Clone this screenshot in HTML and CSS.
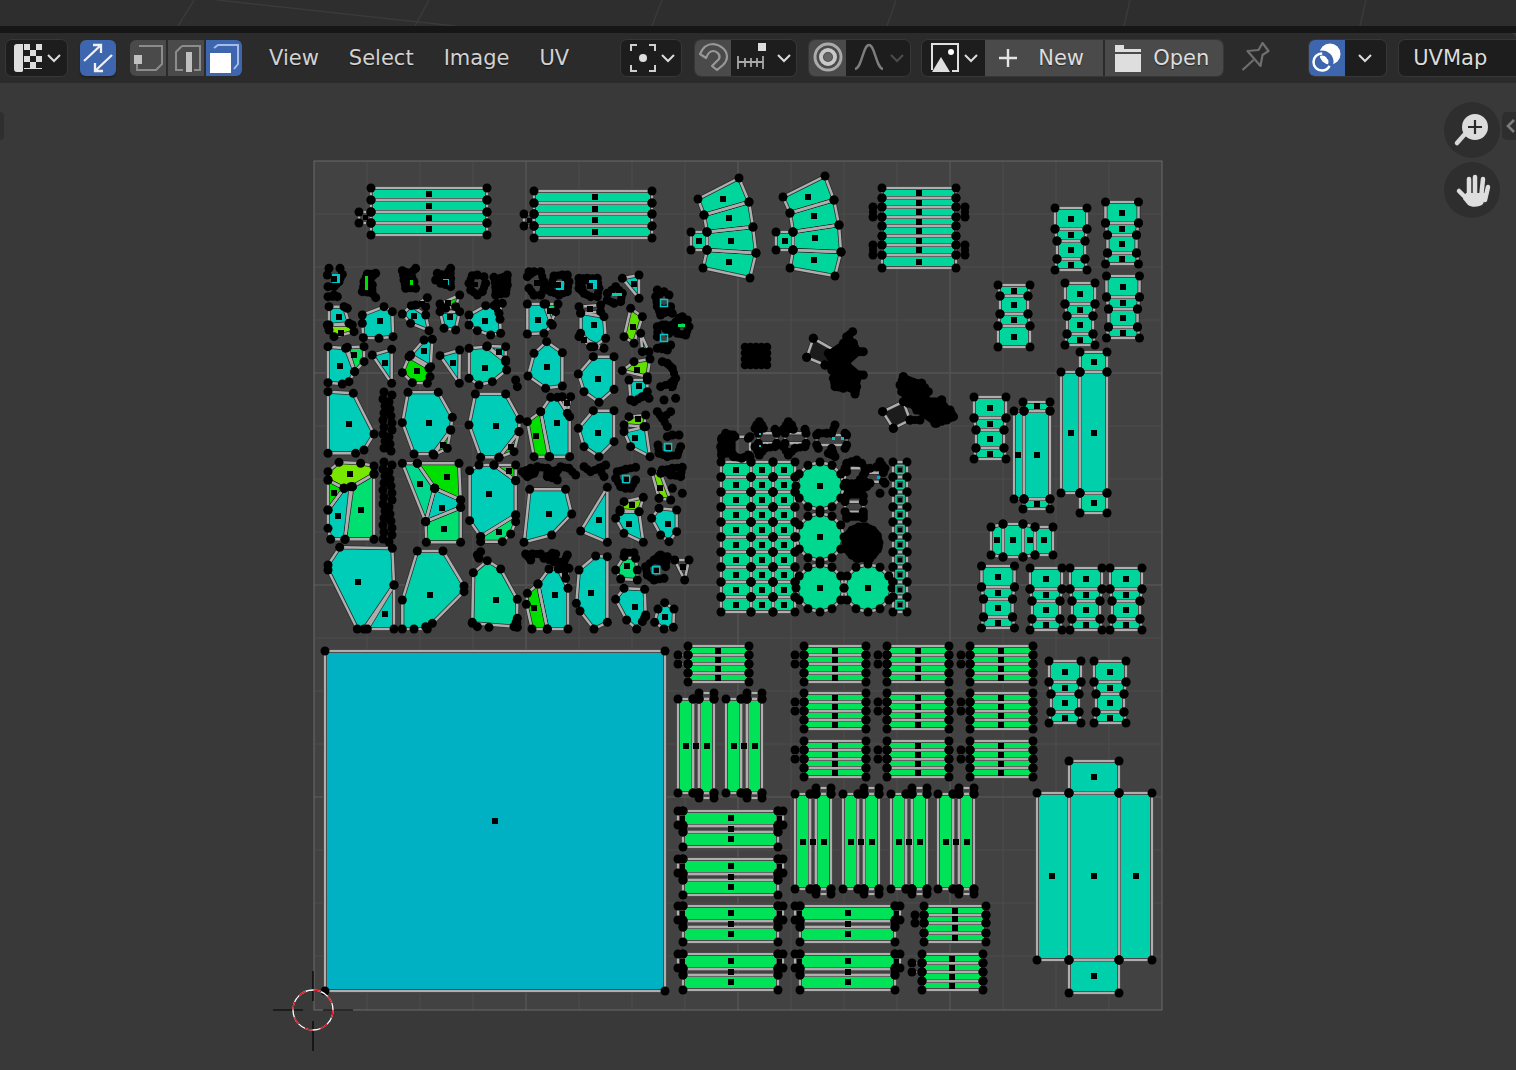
FILE: index.html
```html
<!DOCTYPE html>
<html lang="en">
<head>
<meta charset="utf-8">
<title>UV Editor</title>
<link rel="stylesheet" href="styles.css">
</head>
<body>
<div class="app">
  <div class="viewport-sliver">
    <svg class="sliver-lines" viewBox="0 0 1516 26" width="1516" height="26">
      <path d="M194 0L178 26M217 0L455 26M429 0L415 26M662 0L652 26M896 0L887 26M1130 0L1124 26M1366 0L1360 26"/>
    </svg>
  </div>
  <div class="area-gap"></div>
  <header class="header">
    <div class="field dd dd-editor">
      <svg class="ico" width="30" height="30" viewBox="0 0 30 30">
        <path class="w" d="M1 4a3 3 0 0 1 3-3h6v27a2 2 0 0 1-2 1H4a3 3 0 0 1-3-3z"/>
        <rect class="w" x="11" y="1" width="18" height="25"/>
        <path class="k" d="M17 1h6v6h-6zM11 7h6v6h-6zM23 7h6v6h-6zM17 13h6v6h-6zM11 19h6v6h-6zM23 19h6v6h-6z"/>
      </svg>
      <svg class="chev" width="14" height="10" viewBox="0 0 14 10"><path d="M1 2l6 6 6-6"/></svg>
    </div>
    <button class="tool active sync">
      <svg width="36" height="36" viewBox="0 0 36 36" class="line-w">
        <path d="M4 21L21 5M13 5h8v8M32 15L15 31M23 31h-8v-8"/>
      </svg>
    </button>
    <div class="seg seg-select">
      <button class="tool mode">
        <svg width="36" height="36" viewBox="0 0 36 36"><path class="dimline" d="M9 6h23v18l-6 6H7v-6"/><rect class="dimfill" x="4" y="15" width="8" height="9"/></svg>
      </button>
      <button class="tool mode">
        <svg width="36" height="36" viewBox="0 0 36 36"><path class="dimline" d="M14 6h18v24h-6M15 30H8V12l6-6"/><rect class="dimfill" x="18" y="12" width="6" height="20"/></svg>
      </button>
      <button class="tool mode active">
        <svg width="36" height="36" viewBox="0 0 36 36"><path class="softline" d="M8 8l4-3h20v19l-4 5"/><rect class="fillw" x="4" y="13" width="21" height="20"/></svg>
      </button>
    </div>
    <nav class="menus">
      <span class="menu">View</span><span class="menu">Select</span><span class="menu">Image</span><span class="menu">UV</span>
    </nav>
    <div class="field dd dd-pivot">
      <svg class="ico" width="30" height="30" viewBox="0 0 30 30">
        <path class="brk" d="M3 8V2h6M21 2h6v6M27 22v6h-6M9 28H3v-6"/><circle class="dot" cx="15" cy="15" r="4"/>
      </svg>
      <svg class="chev" width="14" height="10" viewBox="0 0 14 10"><path d="M1 2l6 6 6-6"/></svg>
    </div>
    <div class="seg seg-snap">
      <button class="tool gray w36">
        <svg width="36" height="36" viewBox="0 0 36 36"><path class="magnet" d="M5 14C8 7 13 4 18 4c8 1 14 6 14 13 0 3-2 6-4 8l-6 5-5-4 7-7c2-4-2-8-6-8-3 0-5 2-7 7z"/></svg>
      </button>
      <div class="field-inner w65">
        <svg width="32" height="30" viewBox="0 0 32 30" class="ico">
          <rect class="dimfill2" x="22" y="0" width="8" height="8"/>
          <path class="ruler" d="M2 19h25M2 13v13M27 13v13M9 15v9M15 15v9M21 15v9"/>
        </svg>
        <svg class="chev" width="14" height="10" viewBox="0 0 14 10"><path d="M1 2l6 6 6-6"/></svg>
      </div>
    </div>
    <div class="seg seg-prop">
      <button class="tool gray w37">
        <svg width="36" height="36" viewBox="0 0 36 36"><circle class="ring" cx="18" cy="17" r="13"/><circle class="ring2" cx="18" cy="17" r="7"/><circle class="core" cx="18" cy="17" r="4"/></svg>
      </button>
      <div class="field-inner w64">
        <svg width="32" height="30" viewBox="0 0 32 30" class="ico"><path class="curve" d="M4 26c7-1 8-24 14-24s7 23 14 24"/></svg>
        <svg class="chev dim" width="14" height="10" viewBox="0 0 14 10"><path d="M1 2l6 6 6-6"/></svg>
      </div>
    </div>
    <div class="seg seg-image">
      <div class="field-inner w63">
        <svg class="ico" width="30" height="30" viewBox="0 0 30 30">
          <path class="frame" d="M1 27V1h26v27h-6"/><path class="fillpath" d="M1 29l9-15 9 15z"/><circle class="fillw" cx="20" cy="9" r="3"/>
        </svg>
        <svg class="chev" width="14" height="10" viewBox="0 0 14 10"><path d="M1 2l6 6 6-6"/></svg>
      </div>
      <button class="tool gray textbtn btn-new">
        <svg width="20" height="20" viewBox="0 0 20 20"><path class="plus" d="M10 1v18M1 10h18"/></svg>
        <span class="label">New</span>
      </button>
      <button class="tool gray textbtn btn-open">
        <svg width="28" height="30" viewBox="0 0 28 30"><path class="fillpath" d="M1 2h9v4h17v3H1zM1 11h26v18H1z"/></svg>
        <span class="label">Open</span>
      </button>
    </div>
    <div class="pin">
      <svg width="32" height="32" viewBox="0 0 32 32"><path class="pinline" d="M3.500 28l11-10M8.500 9l11-1 4-7 6 8-6 4-2 11z"/></svg>
    </div>
    <div class="seg seg-overlay">
      <button class="tool active w36b">
        <svg width="36" height="36" viewBox="0 0 36 36"><circle class="fillw" cx="21" cy="14" r="10.500"/><circle class="ovgap" cx="13" cy="22" r="9"/><circle class="ov" cx="13" cy="22" r="8.500"/><circle class="blue-dot" cx="20" cy="17" r="2.500"/></svg>
      </button>
      <div class="field-inner w41">
        <svg class="chev" width="14" height="10" viewBox="0 0 14 10"><path d="M1 2l6 6 6-6"/></svg>
      </div>
    </div>
    <div class="field uvmap"><span class="label">UVMap</span></div>
  </header>
  <main class="editor">
    <svg id="uv" class="uv-canvas" viewBox="0 83 1516 987" width="1516" height="987"></svg>
    <div class="left-tab"></div>
    <div class="right-tab"><svg width="10" height="16" viewBox="0 0 10 16"><path d="M8 2L2 8l6 6"/></svg></div>
    <div class="gizmo gizmo-zoom">
      <svg width="56" height="56" viewBox="0 0 56 56">
        <path class="handle" d="M21 32L13 41"/><circle class="lens" cx="31" cy="25" r="13"/><path class="lensplus" d="M31 18v14M24 25h14"/>
      </svg>
    </div>
    <div class="gizmo gizmo-hand">
      <svg width="56" height="56" viewBox="0 0 56 56">
        <path class="palm" d="M25 36V17M31 34V15M37 36l2-19M41 38l3-13M15 29l9 9"/>
        <path class="palmfill" d="M22 31h21l-4 11c-3 3-11 4-15 1l-5-6z"/>
      </svg>
    </div>
  </main>
</div>
<script src="script.js"></script>
</body>
</html>
```
FILE: styles.css
```css
* { box-sizing: border-box; }
html, body { margin: 0; padding: 0; height: 100%; overflow: hidden; background: #393939; }
.app { width: 1516px; height: 1070px; display: flex; flex-direction: column; font-family: "DejaVu Sans", sans-serif; font-size: 21px; color: #d6d6d6; }
.viewport-sliver { height: 26px; background: #2e2e2e; flex: none; }
.sliver-lines { display: block; }
.sliver-lines path { stroke: #3a3a3a; stroke-width: 1.500; fill: none; }
.area-gap { height: 7px; background: #161616; flex: none; }
.header { height: 50px; flex: none; background: #2b2b2b; display: flex; align-items: center; padding-left: 5px; white-space: nowrap; border-top-right-radius: 6px; overflow: hidden; }
.header > * { flex: none; }
button { font: inherit; color: inherit; border: 0; padding: 0; margin: 0; display: flex; align-items: center; justify-content: center; }
svg { display: block; flex: none; }
.tool { height: 36px; border-radius: 6px; box-shadow: 0 2px 2px rgba(0,0,0,.25); flex: none; }
.active { background: #3d66ae; }
.gray { background: #4a4a4a; }
.field { height: 38px; background: #1d1d1d; border: 1px solid #373737; border-radius: 7px; display: flex; align-items: center; }
.field-inner { height: 36px; background: #1d1d1d; display: flex; align-items: center; flex: none; }
.dd { justify-content: flex-start; }
.dd-editor { width: 63px; padding-left: 7px; gap: 4px; }
.sync { width: 36px; margin-left: 12px; }
.seg { display: flex; height: 36px; border-radius: 6px; overflow: hidden; box-shadow: 0 0 0 1px #373737; }
.seg-select { margin-left: 14px; width: 112px; gap: 2px; box-shadow: none; }
.mode { width: 36px; border-radius: 0; background: #4a4a4a; box-shadow: none; }
.mode.active { background: #3d66ae; }
.menus { display: flex; margin-left: 12px; }
.menu { padding: 0 15px; line-height: 36px; color: #d2d2d2; text-shadow: 0 1px 1px rgba(0,0,0,.5); }
.dd-pivot { width: 62px; margin-left: 36px; padding-left: 7px; gap: 3px; }
.seg-snap { margin-left: 13px; width: 101px; }
.seg-snap .tool, .seg-prop .tool, .seg-image .tool, .seg-overlay .tool { border-radius: 0; box-shadow: none; }
.w36 { width: 36px; }
.w37 { width: 37px; }
.w65 { width: 65px; padding-left: 5px; gap: 9px; }
.w64 { width: 64px; padding-left: 5px; gap: 7px; }
.w63 { width: 63px; padding-left: 9px; gap: 3px; }
.w36b { width: 36px; }
.w41 { width: 41px; padding-left: 13px; }
.seg-prop { margin-left: 13px; width: 101px; }
.seg-image { margin-left: 12px; width: 301px; }
.textbtn { justify-content: flex-start; }
.btn-new { width: 118px; margin-right: 2px; padding-left: 13px; gap: 20px; }
.btn-open { width: 118px; padding-left: 9px; gap: 11px; }
.pin { width: 37px; margin-left: 13px; height: 36px; display: flex; align-items: center; justify-content: center; }
.seg-overlay { margin-left: 36px; width: 77px; }
.uvmap { margin-left: 12px; width: 130px; padding-left: 14px; border-radius: 7px 0 0 7px; border-right: 0; }
.label { color: #dcdcdc; text-shadow: 0 1px 1px rgba(0,0,0,.5); }
.chev path { fill: none; stroke: #dcdcdc; stroke-width: 2; }
.chev.dim path { stroke: #4c4c4c; }
.w { fill: #dedede; }
.k { fill: #1d1d1d; }
.line-w path { fill: none; stroke: #f0f0f0; stroke-width: 2.300; }
.dimline { fill: none; stroke: #8c8c8c; stroke-width: 2; }
.softline { fill: none; stroke: #a4bce6; stroke-width: 2; }
.dimfill { fill: #c0c0c0; }
.dimfill2 { fill: #dcdcdc; }
.fillw { fill: #ffffff; }
.brk { fill: none; stroke: #cfcfcf; stroke-width: 2; }
.dot { fill: #dedede; }
.magnet { fill: none; stroke: #989898; stroke-width: 2.200; stroke-linejoin: round; }
.ruler { fill: none; stroke: #a8a8a8; stroke-width: 1.800; }
.ring { fill: none; stroke: #ababab; stroke-width: 3; }
.ring2 { fill: none; stroke: #c8c8c8; stroke-width: 4; }
.core { fill: #666666; }
.curve { fill: none; stroke: #7d7d7d; stroke-width: 2.400; }
.frame { fill: none; stroke: #e0e0e0; stroke-width: 2; }
.fillpath { fill: #dedede; }
.plus { stroke: #e4e4e4; stroke-width: 2.400; fill: none; }
.pinline { fill: none; stroke: #6e6e6e; stroke-width: 2.200; stroke-linejoin: round; }
.ov { fill: none; stroke: #ffffff; stroke-width: 2.500; stroke-dasharray: 36 20; stroke-dashoffset: -4; }
.ovgap { fill: none; stroke: #3d66ae; stroke-width: 5; }
.blue-dot { fill: #3d66ae; }
.editor { position: relative; flex: 1; background: #393939; overflow: hidden; }
.uv-canvas { position: absolute; left: 0; top: 0; }
.left-tab { position: absolute; left: 0; top: 29px; width: 4px; height: 28px; background: #2f2f2f; border-radius: 0 4px 4px 0; }
.right-tab { position: absolute; right: 0; top: 29px; width: 14px; height: 28px; background: #2e2e2e; border-radius: 5px 0 0 5px; display: flex; align-items: center; padding-left: 4px; }
.right-tab path { fill: none; stroke: #7c7c7c; stroke-width: 2.600; }
.gizmo { position: absolute; left: 1444px; width: 56px; height: 56px; border-radius: 50%; background: #2e2e2e; }
.gizmo-zoom { top: 19px; }
.gizmo-hand { top: 79px; }
.handle { stroke: #d8d8d8; stroke-width: 4.500; stroke-linecap: round; fill: none; }
.lens { fill: #dcdcdc; }
.lensplus { stroke: #2a2a2a; stroke-width: 2.200; fill: none; }
.palm { stroke: #dedede; stroke-width: 4.500; stroke-linecap: round; fill: none; }
.palmfill { fill: #dedede; }
```
FILE: script.js
```js
(function () {
  var NS = 'http://www.w3.org/2000/svg';
  var svg = document.getElementById('uv');
  function el(name, attrs, parent) {
    var n = document.createElementNS(NS, name);
    for (var k in attrs) n.setAttribute(k, attrs[k]);
    (parent || svg).appendChild(n);
    return n;
  }
  var T = '#00cdb8', TG = '#00d69c', TC = '#00cfac', G = '#00d890', BG = '#00e000', LG = '#00e258', Y = '#78e800', C = '#00b1c3', MG = '#00e070';

  // background, image plane and grid
  el('rect', { x: 314, y: 161, width: 848, height: 849, fill: '#424242' });
  var i, x, y;
  var gridD = '', gridT = '';
  for (i = 1; i < 16; i++) {
    x = 314 + 53 * i; y = 161 + 53 * i;
    if (i % 4 === 0) gridT += 'M' + x + ' 161V1010M314 ' + y + 'H1162';
    else gridD += 'M' + x + ' 161V1010M314 ' + y + 'H1162';
  }
  el('path', { d: gridD, stroke: '#4a4a4a', 'stroke-width': 1.500, fill: 'none' });
  el('path', { d: gridT, stroke: '#4f4f4f', 'stroke-width': 2, fill: 'none' });
  el('rect', { x: 314, y: 161, width: 848, height: 849, fill: 'none', stroke: '#6a6a6a', 'stroke-width': 1 });

  var gFill = el('g', {}), gOuter = el('g', { fill: 'none', stroke: '#2a2a2a', 'stroke-width': 4, 'stroke-linejoin': 'round' }),
    gInner = el('g', { fill: 'none', stroke: '#aeaeae', 'stroke-width': 2.500, 'stroke-linejoin': 'round' }),
    gDots = el('g', { fill: '#000' });

  function dot(x, y, r) { el('circle', { cx: x, cy: y, r: r || 4.500 }, gDots); }
  function sq(x, y, s) {
    s = s || 6;
    el('rect', { x: Math.round(x - s / 2), y: Math.round(y - s / 2), width: s, height: s }, gDots);
  }

  // polygon island in page coordinates: flat point list, fill, optional centre
  function P(pts, col, c) {
    var s = '';
    for (var j = 0; j < pts.length; j += 2) s += pts[j] + ',' + pts[j + 1] + ' ';
    if (col) el('polygon', { points: s, fill: col }, gFill);
    el('polygon', { points: s }, gOuter);
    el('polygon', { points: s }, gInner);
    for (j = 0; j < pts.length; j += 2) dot(pts[j], pts[j + 1]);
    if (c) sq(c[0], c[1]);
  }
  function mapper(bx, by) {
    return function (flat) {
      var o = [];
      for (var j = 0; j < flat.length; j += 2) { o.push(bx + flat[j] / 3, by + flat[j + 1] / 3); }
      return o;
    };
  }
  var z3 = mapper(314, 160), z4 = mapper(314, 430), z5 = mapper(700, 320);
  function p3(f, col, c) { P(z3(f), col, c ? z3(c) : null); }
  function p4(f, col, c) { P(z4(f), col, c ? z4(c) : null); }
  function p5(f, col, c) { P(z5(f), col, c ? z5(c) : null); }
  // tight clusters of vertices: close neighbours get a bridging vertex so they read as lumps
  function clump(f) {
    for (var j = 0; j < f.length; j += 2) {
      dot(f[j], f[j + 1], 4.500);
      for (var k = j + 2; k < f.length; k += 2) {
        var d = Math.hypot(f[j] - f[k], f[j + 1] - f[k + 1]);
        if (d > 7 && d < 11) dot((f[j] + f[k]) / 2, (f[j + 1] + f[k + 1]) / 2, 4);
      }
    }
  }
  function solid(f) {
    var s = '';
    for (var j = 0; j < f.length; j += 2) {
      s += f[j] + ',' + f[j + 1] + ' ';
      dot(f[j], f[j + 1], 4.500);
    }
    el('polygon', { points: s, fill: '#000', stroke: '#000', 'stroke-width': 5, 'stroke-linejoin': 'round' }, gDots);
  }
  function ring(x, y, col, s) {
    el('rect', { x: x - s / 2, y: y - s / 2, width: s, height: s, fill: 'none', stroke: col, 'stroke-width': 1.500 }, gDots);
  }
  function bit(x, y, w, h, col) { el('rect', { x: x, y: y, width: w, height: h, fill: col }, gDots); }

  // stacked horizontal strips
  function strips(x0, x1, ys, cx, col, leftIdx, step) {
    for (var j = 0; j < ys.length - 1; j++) {
      P([x0, ys[j], x1, ys[j], x1, ys[j + 1], x0, ys[j + 1]], col, [cx, (ys[j] + ys[j + 1]) / 2]);
    }
    if (leftIdx != null) {
      var a = ys[leftIdx], b = ys[leftIdx + 1], lx = x0 - (step || 10);
      P([lx, a, x0, a, x0, b, lx, b], null, null);
    }
  }
  // hourglass stack
  function hour(xc, y0, hw, flip, h) {
    h = h || 62;
    var r = [[0, hw], [21, hw], [33, hw - 2], [51, hw - 2], [62, hw]].map(function (v) {
      var o = v[0] * h / 62;
      return [flip ? y0 + h - o : y0 + o, v[1]];
    });
    for (var j = 0; j < 4; j++) {
      var a = r[j], b = r[j + 1];
      P([xc - a[1], a[0], xc + a[1], a[0], xc + b[1], b[0], xc - b[1], b[0]], TG, [xc, (a[0] + b[0]) / 2]);
    }
  }
  function columns(xs, y0, step, n, col) {
    for (var c = 0; c < xs.length - 1; c++) for (var r = 0; r < n; r++) {
      var a = xs[c], b = xs[c + 1], t = y0 + r * step, u = t + step;
      P([a, t, b, t, b, u, a, u], col, [(a + b) / 2, (t + u) / 2]);
    }
  }
  function ngon(cx, cy, r, n, col) {
    var f = [];
    for (var j = 0; j < n; j++) { var a = j * 2 * Math.PI / n; f.push(cx + r * Math.cos(a), cy + r * Math.sin(a)); }
    el('circle', { cx: cx, cy: cy, r: r - 2.500, fill: col }, gFill);
    P(f, null, [cx, cy]);
  }
  function vPair(x0, yt, yb) {
    var a = x0, b = x0 + 15, c = x0 + 21, d = x0 + 36;
    P([a, yt, b, yt, b, yb, a, yb], LG, [(a + b) / 2, (yt + yb) / 2]);
    P([b, yt, c, yt, c, yb, b, yb], null, [(b + c) / 2, (yt + yb) / 2]);
    P([c, yt, d, yt, d, yb, c, yb], LG, [(c + d) / 2, (yt + yb) / 2]);
    P([c, yt - 6, d, yt - 6, d, yt, c, yt], null, null);
    P([c, yb, d, yb, d, yb + 5, c, yb + 5], null, null);
  }
  function fatH(x0, x1, y0) {
    var cx = (x0 + x1) / 2;
    P([x0, y0, x1, y0, x1, y0 + 15, x0, y0 + 15], LG, [cx, y0 + 7]);
    P([x0, y0 + 15, x1, y0 + 15, x1, y0 + 21, x0, y0 + 21], null, [cx, y0 + 18]);
    P([x0, y0 + 21, x1, y0 + 21, x1, y0 + 36, x0, y0 + 36], LG, [cx, y0 + 28]);
    P([x0 - 5, y0, x0, y0, x0, y0 + 14, x0 - 5, y0 + 14], null, null);
    P([x1, y0, x1 + 5, y0, x1 + 5, y0 + 14, x1, y0 + 14], null, null);
    sq(x0 - 1, y0 + 7, 5); sq(x1 + 1, y0 + 7, 5);
  }

  // big square
  P([325, 651, 665, 651, 665, 991, 325, 991], C, [495, 821]);

  // top strips
  strips(371, 487, [188, 200, 212, 223, 235], 429, TG, 2, 12);
  strips(534, 652, [191, 203, 214, 226, 238], 595, TG, 2, 10);
  sq(365, 217, 5); sq(529, 220, 5);

  // fans
  function fan(l, r, cs, sx) {
    for (var j = 0; j < 4; j++) {
      P([l[j][0], l[j][1], r[j][0], r[j][1], r[j + 1][0], r[j + 1][1], l[j + 1][0], l[j + 1][1]], TG, cs[j]);
    }
    P([sx, l[2][1], l[2][0], l[2][1], l[3][0], l[3][1], sx, l[3][1]], TG, [(sx + l[2][0]) / 2, (l[2][1] + l[3][1]) / 2]);
  }
  fan([[698, 199], [704, 215], [707, 232], [707, 250], [703, 268]], [[739, 178], [749, 202], [753, 227], [756, 253], [750, 278]],
    [[723, 199], [729, 218], [731, 241], [729, 262]], 691);
  fan([[783, 197], [790, 213], [793, 232], [793, 250], [790, 268]], [[825, 176], [834, 200], [839, 225], [841, 252], [835, 276]],
    [[808, 197], [814, 216], [815, 238], [814, 260]], 776);

  // stack
  strips(882, 956, [188, 198, 207, 217, 226, 236, 245, 255, 268], 919, TG, null);
  clump([873, 207, 873, 217, 965, 207, 965, 217, 873, 245, 873, 255, 965, 245, 965, 255]);

  // right column hourglasses
  hour(1071, 208, 16); hour(1122, 202, 16.500); hour(1014, 285, 16, true);
  hour(1080, 283, 15); hour(1123, 276, 16.500); hour(990, 397, 16);
  hour(998, 566, 16.500); hour(1046, 568, 16); hour(1086, 568, 16); hour(1126, 568, 16);
  hour(1065, 661, 16); hour(1110, 661, 16);

  // tall cross pieces
  P([1061, 372, 1080, 372, 1080, 493, 1061, 493], TC, [1071, 433]);
  P([1080, 372, 1107, 372, 1107, 493, 1080, 493], TC, [1094, 433]);
  P([1080, 352, 1107, 352, 1107, 372, 1080, 372], TG, [1094, 362]);
  P([1080, 493, 1107, 493, 1107, 513, 1080, 513], TG, [1094, 503]);
  P([1014, 411, 1024, 411, 1024, 499, 1014, 499], TC, [1018, 455]);
  P([1024, 411, 1050, 411, 1050, 499, 1024, 499], TC, [1037, 455]);
  P([1023, 402, 1050, 402, 1050, 411, 1024, 411], TG, [1037, 406]);
  P([1024, 499, 1050, 499, 1050, 509, 1023, 509], TG, [1037, 504]);
  // small horizontal piece
  P([991, 527, 1003, 524, 1003, 557, 991, 555], TG, [997, 540]);
  P([1003, 524, 1023, 524, 1023, 557, 1003, 557], TG, [1013, 540]);
  P([1023, 524, 1035, 527, 1035, 555, 1023, 557], TG, [1030, 540]);
  P([1035, 527, 1053, 527, 1053, 555, 1035, 555], TG, [1044, 540]);

  // small columns and discs
  columns([721, 751, 773, 795], 462, 15, 10, G);
  ngon(820, 486, 24, 12, G); ngon(820, 537, 24, 12, G); ngon(820, 588, 24, 12, G); ngon(868, 588, 24, 12, G);
  for (i = 0; i < 10; i++) {
    P([893, 462 + i * 15, 907, 462 + i * 15, 907, 477 + i * 15, 893, 477 + i * 15], null, null);
    ring(900, 469.500 + i * 15, '#00d8a0', 8); sq(900, 469.500 + i * 15, 4);
  }

  // black clumps in the middle
  for (x = 745; x <= 768; x += 5.500) for (y = 347; y <= 365; y += 6) dot(x, y, 4.300);
  p5([340, 55, 320, 112, 375, 135, 410, 95], '#1c1c1c', null);
  solid(z5([385, 100, 430, 70, 460, 70, 480, 95, 440, 130, 480, 165, 465, 215, 410, 195, 395, 150]));
  clump(z5([340, 55, 320, 112, 375, 135, 458, 35, 440, 50, 470, 95, 490, 95, 490, 165, 470, 200, 465, 222, 405, 200, 430, 205, 460, 70, 400, 175]));
  p5([548, 275, 580, 325, 630, 300, 610, 245], '#1c1c1c', null);
  solid(z5([610, 170, 665, 190, 680, 240, 725, 240, 760, 290, 705, 310, 650, 270, 625, 250, 605, 215]));
  clump(z5([610, 170, 600, 195, 610, 215, 635, 190, 665, 190, 685, 215, 548, 275, 580, 325, 630, 300, 660, 300, 710, 310, 725, 240, 750, 270, 760, 290, 740, 300]));
  p5([175, 340, 230, 340, 230, 370, 175, 370], null, null);
  clump(z5([178, 305, 165, 325, 190, 325, 225, 328, 225, 380, 165, 380, 178, 405, 195, 385, 170, 315, 185, 315]));
  bit(759, 433, 2, 2, '#00c8c8'); bit(759, 445, 2, 2, '#00c8c8');
  p5([255, 340, 318, 340, 318, 370, 255, 370], null, null);
  clump(z5([265, 305, 250, 328, 280, 328, 315, 328, 315, 380, 250, 380, 265, 405, 285, 385, 260, 315, 275, 315]));
  p5([350, 345, 440, 345, 440, 375, 350, 375], null, null);
  clump(z5([405, 315, 355, 340, 380, 340, 395, 340, 435, 340, 435, 385, 355, 385, 385, 400, 405, 410, 395, 385]));
  bit(832, 437, 3, 3, '#00c8c8'); bit(841, 437, 3, 3, '#00c8c8');
  p5([105, 350, 150, 350, 150, 410, 105, 410], null, null);
  solid(z5([65, 355, 100, 350, 100, 405, 65, 405]));
  clump(z5([77, 340, 100, 345, 65, 360, 62, 380, 65, 405, 100, 410, 145, 355, 145, 405, 125, 415]));
  p5([435, 445, 495, 445, 495, 490, 435, 490], null, null);
  clump(z5([440, 430, 470, 420, 485, 430, 455, 425, 440, 490, 470, 490, 490, 465, 440, 455]));
  p5([495, 458, 550, 458, 550, 485, 495, 485], null, null);
  clump(z5([540, 425, 510, 445, 555, 445, 555, 490, 510, 490, 540, 520, 500, 500, 530, 440]));
  bit(877, 476, 3, 3, '#00a8d0');
  solid(z5([440, 500, 490, 500, 490, 528, 440, 528]));
  p5([435, 545, 490, 545, 490, 575, 435, 575], null, null);
  solid(z5([440, 585, 490, 585, 490, 595, 440, 595]));
  // lens-shaped blob
  solid(z5([487, 625, 525, 640, 535, 680, 510, 715, 470, 715, 442, 680, 450, 640]));
  var ell = [];
  for (i = 0; i < 14; i++) { var an = i * Math.PI / 7; ell.push(487 + 50 * Math.cos(an), 668 + 48 * Math.sin(an)); }
  clump(z5(ell));
  p5([480, 640, 505, 640, 505, 695, 480, 695], null, null);
  solid(z5([484, 648, 501, 648, 501, 688, 484, 688]));

  // strip groups, lower right
  var hs = [[646, 655, 664, 673, 682], [693, 702, 711, 720, 729], [741, 750, 759, 768, 777]];
  var gx = [[804, 866, 835], [887, 949, 918], [970, 1033, 1001]];
  gx.forEach(function (g) { hs.forEach(function (ys) { strips(g[0], g[1], ys, g[2], LG, 1, 9); }); });
  strips(688, 749, hs[0], 718, LG, 1, 10);
  strips(924, 986, [906, 915, 923, 933, 942], 955, LG, 1, 9);
  strips(922, 983, [954, 963, 972, 981, 990], 952, LG, 1, 10);
  vPair(678, 699, 793); vPair(726, 699, 793);
  vPair(795, 794, 889); vPair(843, 794, 889); vPair(891, 794, 889); vPair(938, 794, 889);
  [811, 859, 906, 954].forEach(function (y0) { fatH(683, 778, y0); });
  [906, 954].forEach(function (y0) { fatH(800, 895, y0); });

  // big cross
  P([1037, 793, 1069, 793, 1069, 960, 1037, 960], TC, [1052, 876]);
  P([1069, 793, 1119, 793, 1119, 960, 1069, 960], TC, [1094, 876]);
  P([1119, 793, 1152, 793, 1152, 960, 1119, 960], TC, [1136, 876]);
  P([1069, 761, 1119, 761, 1119, 793, 1069, 793], TC, [1094, 777]);
  P([1069, 960, 1119, 960, 1119, 993, 1069, 993], TC, [1094, 976]);

  // organic islands, upper block (first row of clumps)
  clump(z3([45, 325, 78, 325, 85, 343, 40, 345, 75, 365, 42, 380, 60, 380]));
  clump(z3([160, 342, 185, 340, 150, 365, 175, 375, 145, 395, 175, 400, 185, 413, 160, 385, 170, 355]));
  clump(z3([265, 332, 305, 325, 290, 340, 270, 360, 300, 365, 275, 385, 305, 385, 285, 360, 285, 380]));
  clump(z3([410, 325, 370, 340, 395, 345, 365, 360, 410, 380, 380, 370, 410, 355]));
  clump(z3([475, 347, 510, 350, 465, 370, 515, 370, 470, 390, 505, 395, 490, 405, 490, 345]));
  clump(z3([540, 352, 580, 345, 560, 355, 545, 380, 580, 375, 545, 405, 575, 400, 560, 395]));
  clump(z3([645, 335, 680, 335, 640, 350, 690, 365, 645, 385, 690, 390, 660, 405, 680, 405, 660, 335]));
  clump(z3([720, 348, 760, 345, 712, 375, 765, 365, 710, 395, 760, 395, 735, 405, 745, 345]));
  clump(z3([795, 355, 850, 355, 820, 355, 795, 385, 855, 385, 830, 410, 850, 410, 800, 370, 810, 400]));
  clump(z3([880, 400, 905, 380, 925, 400, 880, 420, 920, 425, 900, 430]));
  bit(332, 274, 8, 9, '#00c8c8'); bit(556, 281, 8, 9, '#00c8c8'); bit(589, 280, 8, 9, '#00c8c8'); bit(443, 279, 6, 6, '#00c8c8');
  bit(365, 276, 3, 14, BG); bit(410, 280, 3, 5, BG); bit(612, 293, 10, 3, '#00d0a8');
  sq(334, 279); sq(475, 284, 5); sq(500, 287, 5); sq(537, 283); sq(558, 285); sq(590, 286); sq(445, 282, 5); sq(612, 288, 5);
  p3([925, 355, 975, 345, 975, 415], T, [960, 372]);

  // second row
  p3([45, 440, 90, 440, 105, 490, 45, 495], T, [75, 470]);
  clump(z3([42, 410, 70, 410, 100, 445, 60, 405]));
  p3([40, 495, 115, 495, 120, 515, 60, 530, 45, 510], Y, [80, 520]);
  p3([145, 465, 210, 440, 235, 455, 237, 530, 195, 535, 148, 533, 145, 490], T, [197, 483]);
  p3([305, 435, 340, 413, 335, 440], LG, [325, 432]);
  p3([265, 462, 292, 437, 335, 465, 345, 512, 290, 490], T, [300, 467]);
  p3([378, 432, 437, 405, 425, 440, 395, 445], BG, [402, 430]);
  p3([378, 455, 437, 455, 425, 510, 390, 505], T, [408, 470]);
  p3([465, 465, 515, 437, 540, 437, 558, 478, 560, 520, 530, 525, 490, 512, 465, 495], T, [512, 482]);
  p3([548, 430, 565, 430, 555, 460], null, [550, 448]);
  p3([640, 432, 690, 432, 715, 495, 690, 520, 640, 522], T, [672, 480]);
  p3([695, 432, 732, 432, 725, 455, 710, 490], LG, [708, 452]);
  p3([800, 458, 870, 470, 875, 535, 840, 560, 800, 520], T, [840, 495]);
  p3([795, 440, 860, 435, 860, 455, 800, 460], null, [828, 447]);
  p3([795, 530, 870, 565, 830, 560], null, [810, 540]);
  p3([950, 445, 985, 470, 960, 550, 930, 530], '#5ee000', [957, 500]);
  p3([980, 520, 1005, 575, 985, 575], T, null);
  clump(z3([1030, 390, 1050, 395, 1065, 405, 1070, 440, 1030, 440, 1040, 465, 1075, 460, 1050, 450, 1025, 410, 1060, 455]));
  ring(664, 303, '#00c8c8', 7);
  clump(z3([1095, 475, 1120, 480, 1075, 495, 1125, 500, 1115, 525, 1090, 520, 1085, 505, 1105, 470]));
  bit(678, 324, 7, 3, LG);
  clump(z3([1030, 500, 1055, 495, 1030, 530, 1065, 520, 1070, 555, 1030, 565, 1060, 570, 1045, 560, 1045, 495]));
  ring(664, 338, '#00c8c8', 7);

  // third row
  p3([42, 560, 95, 565, 122, 635, 105, 665, 85, 672, 42, 668], T, [78, 618]);
  p3([100, 562, 150, 560, 150, 605, 122, 635], LG, [120, 585]);
  p3([175, 585, 233, 568, 233, 670], T, [213, 608]);
  p3([330, 540, 355, 538, 350, 620, 290, 585], T, [330, 572]);
  p3([265, 638, 285, 590, 345, 625, 348, 650, 340, 670, 295, 668], BG, [308, 632]);
  p3([378, 587, 437, 570, 436, 670], T, [417, 608]);
  p3([520, 558, 575, 560, 575, 600], T, [555, 575]);
  p3([465, 565, 518, 560, 575, 605, 578, 630, 535, 665, 495, 675, 465, 655], TC, [512, 623]);
  p3([698, 545, 745, 578, 745, 678, 695, 685, 642, 648, 660, 580], T, [698, 620]);
  p3([838, 590, 900, 590, 900, 688, 855, 727, 810, 695, 793, 642], T, [852, 657]);
  p3([960, 605, 1008, 597, 1000, 650, 925, 632], '#5ee000', [968, 630]);
  p3([945, 660, 1000, 660, 1000, 695, 950, 720], T, [975, 677]);
  clump(z3([985, 710, 960, 725, 1005, 715]));
  clump(z3([1045, 605, 1075, 625, 1085, 655, 1070, 670, 1040, 680, 1085, 715, 1050, 720, 1075, 680, 1060, 610]));
  sq(671, 388, 5); clump(z3([605, 660, 610, 680]));

  // fourth row
  p3([42, 695, 118, 700, 180, 822, 150, 870, 125, 880, 42, 880], T, [105, 792]);
  p3([282, 697, 373, 697, 415, 772, 410, 810, 357, 882, 300, 882, 265, 788], T, [345, 788]);
  p3([410, 810, 400, 865, 360, 885], BG, [388, 855]);
  p3([484, 702, 575, 702, 617, 778, 615, 815, 555, 892, 500, 892, 465, 795], T, [546, 798]);
  p3([615, 815, 600, 875, 555, 892], BG, [590, 860]);
  p3([640, 785, 680, 755, 705, 890, 660, 890], BG, [665, 828]);
  p3([680, 755, 710, 712, 730, 712, 767, 770, 767, 890, 707, 890], T, [728, 788]);
  p3([745, 710, 770, 710, 760, 760], BG, [758, 728]);
  p3([838, 752, 900, 752, 900, 845, 855, 890, 810, 860, 793, 805], T, [852, 820]);
  p3([945, 770, 995, 765, 990, 800, 930, 795], '#5ee000', [972, 778]);
  p3([930, 815, 995, 800, 1008, 890, 950, 860], T, [962, 834]);
  clump(z3([1030, 755, 1070, 755, 1060, 800, 1045, 775]));
  sq(665, 417, 5);
  clump(z4([1032, 45, 1060, 20, 1095, 15, 1100, 50, 1090, 75, 1060, 80, 1035, 70, 1075, 15]));
  ring(668, 447, '#00c8c8', 7); sq(668, 447, 5);

  // clump column with lobed outline
  for (y = 392; y < 545; y += 7) {
    if (y > 452 && y < 460) continue;
    var wob = (y * 7) % 5;
    dot(383 + wob % 3, y, 4.500); dot(392 - wob % 4, y + 3, 4.500);
  }

  // fifth row (block at y 460-545)
  p4([42, 125, 75, 97, 140, 100, 180, 108, 180, 132, 115, 170, 90, 175, 42, 150], Y, [108, 132]);
  p4([42, 150, 90, 175, 42, 240], BG, [60, 188]);
  p4([42, 240, 90, 175, 110, 170, 93, 328, 50, 328, 42, 295], T, [72, 258]);
  p4([115, 170, 180, 132, 180, 328, 93, 328], MG, [141, 240]);
  p4([265, 100, 310, 100, 362, 175, 335, 275], G, [318, 162]);
  p4([310, 100, 435, 100, 440, 210, 362, 175], BG, [398, 141]);
  p4([362, 175, 440, 210, 440, 232, 335, 275], T, [384, 234]);
  p4([335, 275, 440, 232, 440, 337, 337, 337], MG, [390, 297]);
  p4([467, 122, 495, 105, 540, 105, 605, 152, 605, 255, 500, 320, 467, 272], T, [525, 192]);
  p4([540, 105, 605, 105, 605, 152], BG, [585, 122]);
  p4([500, 320, 605, 255, 605, 275, 590, 312, 565, 335, 500, 335], MG, [555, 306]);
  p4([647, 178, 755, 178, 773, 252, 713, 315, 630, 337], T, [705, 252]);
  p4([800, 303, 880, 172, 880, 337], T, [855, 270]);
  p4([930, 215, 988, 202, 975, 245, 918, 240], '#70e000', [953, 225]);
  p4([905, 265, 918, 245, 975, 245, 988, 337, 930, 310], T, [945, 282]);
  p4([1035, 235, 1088, 240, 1088, 305, 1065, 335, 1040, 315, 1013, 265], T, [1062, 282]);
  p4([1013, 125, 1040, 130, 1070, 210, 1035, 205], '#70e000', [1038, 173]);
  clump(z4([1045, 120, 1075, 115, 1105, 112, 1100, 140, 1070, 135, 1105, 190, 1075, 175, 1060, 125]));
  clump(z4([905, 145, 935, 118, 965, 112, 950, 175, 920, 170, 965, 150, 910, 125, 935, 175]));
  ring(626, 479, '#00c8c8', 7); sq(626, 479, 5);
  clump(z4([625, 125, 650, 115, 670, 110, 640, 140, 700, 115, 740, 110, 725, 130, 700, 140, 730, 150, 765, 115, 785, 135, 810, 110, 830, 125, 855, 115, 875, 105, 870, 140, 660, 130, 715, 130]));

  // sixth row
  p4([77, 352, 235, 355, 240, 465, 150, 597, 130, 597, 42, 420, 42, 405], T, [132, 456]);
  p4([240, 465, 240, 597, 160, 597], T, [213, 552]);
  p4([310, 363, 387, 363, 450, 468, 450, 485, 355, 580, 340, 597, 265, 597, 265, 510], TC, [348, 495]);
  p4([478, 428, 520, 392, 560, 417, 610, 508, 608, 590, 475, 580], TG, [545, 510]);
  clump(z4([490, 375, 500, 365, 495, 385, 475, 577, 490, 590, 525, 592, 600, 590, 610, 565, 610, 592, 300, 597, 335, 590]));
  p4([640, 490, 672, 462, 700, 597, 654, 597, 637, 523], BG, [660, 533]);
  p4([672, 462, 705, 417, 733, 417, 762, 475, 762, 597, 700, 597], T, [723, 495]);
  p4([745, 415, 765, 415, 755, 445], null, [752, 434]);
  clump(z4([635, 372, 655, 372, 650, 390, 680, 372, 690, 385, 715, 370, 725, 372, 720, 395, 760, 375, 750, 395]));
  p4([845, 378, 880, 380, 880, 577, 840, 597, 798, 543, 787, 520, 795, 420], T, [830, 488]);
  p4([930, 380, 965, 385, 970, 420, 970, 450, 920, 447, 905, 420], MG, [938, 407]);
  clump(z4([932, 368, 960, 368]));
  p4([930, 475, 992, 478, 995, 560, 968, 597, 938, 570, 905, 508], T, [963, 530]);
  clump(z4([985, 575, 995, 555]));
  p4([1052, 518, 1080, 537, 1078, 592, 1050, 597, 1022, 577, 1032, 537], T, [1052, 560]);
  p4([1082, 390, 1125, 390, 1112, 450], null, [1107, 410]);
  clump(z4([1040, 375, 1060, 380, 1020, 390, 995, 410, 1000, 435, 1050, 445, 1020, 450, 1035, 378, 1055, 410, 1045, 395]));
  ring(656, 570, '#00c8c8', 7); sq(656, 570, 5);

  // 3D cursor
  var cur = el('g', { fill: 'none' });
  el('path', { d: 'M273 1010H303M323 1010H353M313 971V1001M313 1021V1051', stroke: '#000', 'stroke-width': 1.200 }, cur);
  el('circle', { cx: 313, cy: 1010, r: 20, stroke: '#ffffff', 'stroke-width': 1.300 }, cur);
  el('circle', { cx: 313, cy: 1010, r: 20, stroke: '#e01020', 'stroke-width': 1.300, 'stroke-dasharray': '7.850 7.850' }, cur);
})();
```
